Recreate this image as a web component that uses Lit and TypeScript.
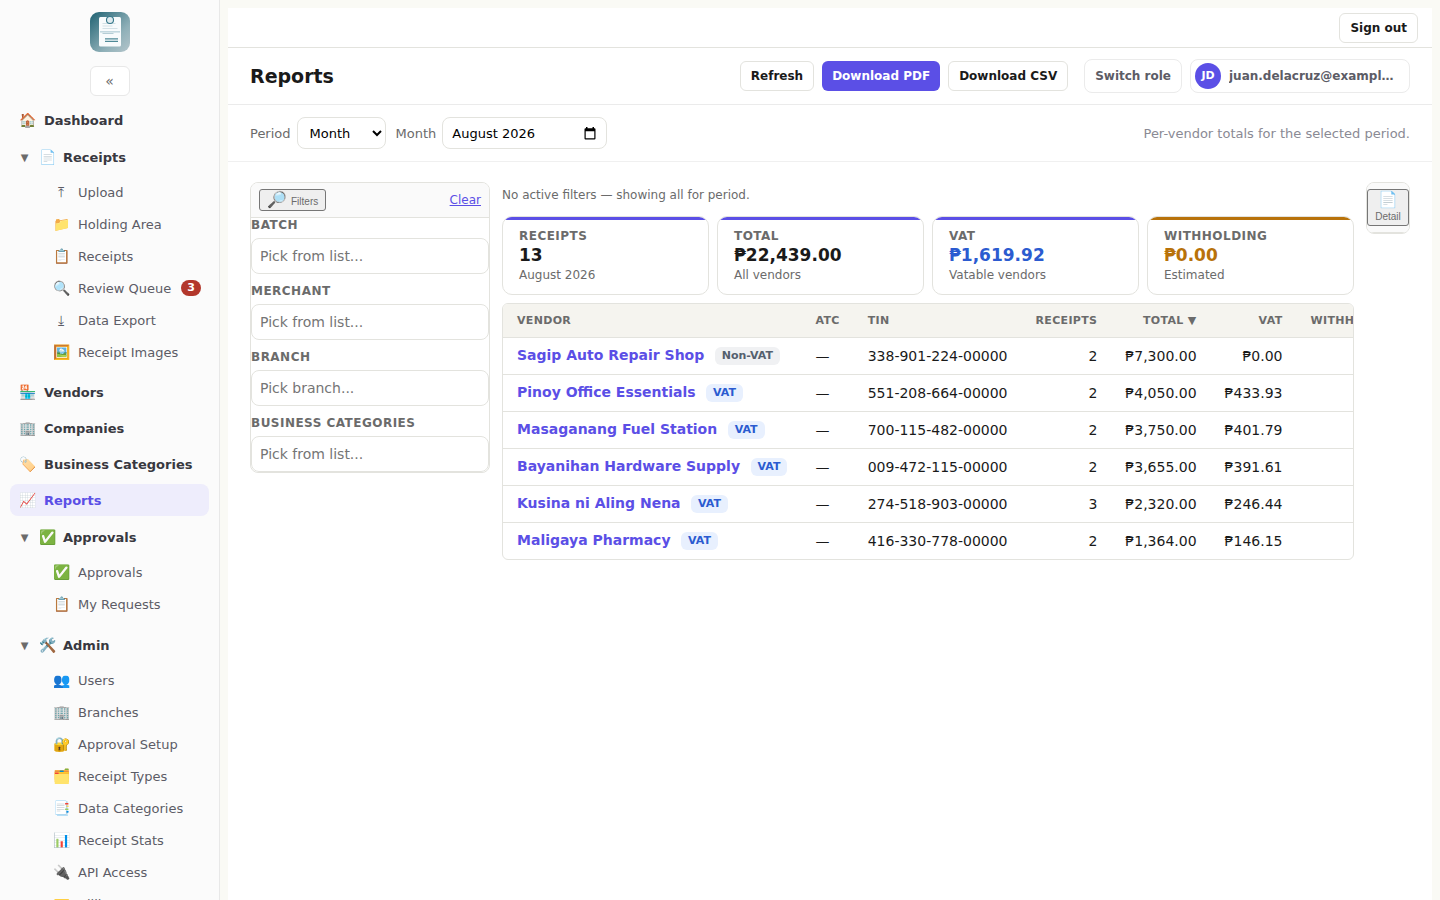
import { LitElement, html, css, nothing } from "lit";
import { customElement, property, state } from "lit/decorators.js";
import { classMap } from "lit/directives/class-map.js";

interface NavItem {
  icon: string;
  label: string;
  badge?: number;
  active?: boolean;
  children?: NavItem[];
}

const NAV: NavItem[] = [
  { icon: "🏠", label: "Dashboard" },
  {
    icon: "📄",
    label: "Receipts",
    children: [
      { icon: "⤒", label: "Upload" },
      { icon: "📁", label: "Holding Area" },
      { icon: "📋", label: "Receipts" },
      { icon: "🔍", label: "Review Queue", badge: 3 },
      { icon: "⤓", label: "Data Export" },
      { icon: "🖼️", label: "Receipt Images" },
    ],
  },
  { icon: "🏪", label: "Vendors" },
  { icon: "🏢", label: "Companies" },
  { icon: "🏷️", label: "Business Categories" },
  { icon: "📈", label: "Reports", active: true },
  {
    icon: "✅",
    label: "Approvals",
    children: [
      { icon: "✅", label: "Approvals" },
      { icon: "📋", label: "My Requests" },
    ],
  },
  {
    icon: "🛠️",
    label: "Admin",
    children: [
      { icon: "👥", label: "Users" },
      { icon: "🏢", label: "Branches" },
      { icon: "🔐", label: "Approval Setup" },
      { icon: "🗂️", label: "Receipt Types" },
      { icon: "📑", label: "Data Categories" },
      { icon: "📊", label: "Receipt Stats" },
      { icon: "🔌", label: "API Access" },
      { icon: "💳", label: "Billing" },
    ],
  },
];

@customElement("side-nav")
class SideNav extends LitElement {
  static styles = css`
    :host {
      display: flex;
      flex-direction: column;
      box-sizing: border-box;
      height: 100%;
      overflow: hidden;
      padding: 12px 10px 0;
      background: #fbfbfb;
      border-right: 1px solid #e8e8e8;
      font-size: 13px;
      line-height: 16px;
    }
    .brand {
      display: flex;
      flex-direction: column;
      align-items: center;
      gap: 14px;
      margin-bottom: 8px;
    }
    .logo {
      display: block;
      width: 40px;
      height: 40px;
    }
    .collapse {
      box-sizing: border-box;
      width: 40px;
      height: 30px;
      padding: 0;
      border: 1px solid #e8e8e8;
      border-radius: 6px;
      background: #fff;
      color: #6b6b6b;
      font: 14px "DejaVu Sans", sans-serif;
    }
    .nav {
      display: flex;
      flex-direction: column;
      gap: 4px;
    }
    .link,
    .head {
      display: flex;
      align-items: center;
      gap: 9px;
      box-sizing: border-box;
      width: 100%;
      min-height: 32px;
      padding: 2px 9px 0;
      border: 0;
      border-radius: 8px;
      background: none;
      color: #38383f;
      font: inherit;
      font-weight: 700;
      text-align: left;
      text-decoration: none;
      white-space: nowrap;
    }
    .head {
      gap: 8px;
      min-height: 34px;
      padding: 2px 10px 0;
    }
    .link.active {
      background: #eeedfc;
      color: #5b4fe6;
    }
    .icon {
      display: flex;
      justify-content: center;
      flex: none;
      width: 16px;
      padding-bottom: 2px;
      font-size: 14px;
    }
    .caret {
      width: 9px;
      padding-right: 2px;
      color: #6b6b6b;
      font-size: 10px;
      font-weight: 400;
      text-align: center;
    }
    .group {
      display: flex;
      flex-direction: column;
      gap: 2px;
      padding-bottom: 4px;
    }
    .children {
      padding-left: 34px;
    }
    .children .link {
      padding-right: 8px;
      color: #5c5c66;
      font-weight: 400;
    }
    .badge {
      padding: 0 6px;
      margin: 0 0 2px 1px;
      border-radius: 8px;
      background: #b3372b;
      color: #fff;
      font-size: 11px;
      font-weight: 700;
    }
  `;

  private renderLink(item: NavItem) {
    return html`<a class=${classMap({ link: true, active: !!item.active })} href="#">
      <span class="icon">${item.icon}</span>
      <span>${item.label}</span>
      ${item.badge ? html`<span class="badge">${item.badge}</span>` : nothing}
    </a>`;
  }

  private renderGroup(item: NavItem) {
    return html`<div class="group">
      <button class="head" aria-expanded="true">
        <span class="caret">▼</span>
        <span class="icon">${item.icon}</span>
        <span>${item.label}</span>
      </button>
      <div class="children">${item.children!.map((c) => this.renderLink(c))}</div>
    </div>`;
  }

  render() {
    return html`
      <div class="brand">
        <svg class="logo" viewBox="0 0 40 40" aria-hidden="true">
          <defs>
            <linearGradient id="g" x1="0" y1="0" x2="1" y2="1">
              <stop offset="0" stop-color="#1f6272" />
              <stop offset="0.65" stop-color="#8fb0b8" />
              <stop offset="1" stop-color="#b4c5cb" />
            </linearGradient>
          </defs>
          <rect width="40" height="40" rx="9" fill="url(#g)" />
          <rect x="9" y="5" width="22" height="29.500" rx="1.500" fill="#f8fbfc" />
          <path d="M12.500 11.500h13M12.500 14h10M12.500 16.500h15" stroke="#d3e1e6" stroke-width="1" />
          <path d="M10 19.800h20" stroke="#c3d8df" stroke-width="1.600" />
          <path d="M12.500 21.500h11" stroke="#b5cdd5" stroke-width="1" />
          <path d="M15 26.800h13M15 29.400h13" stroke="#4f8a97" stroke-width="1.300" />
          <circle cx="20" cy="8" r="3.500" fill="#dfeaee" stroke="#34778a" stroke-width="1.100" />
        </svg>
        <button class="collapse" aria-label="Collapse menu">«</button>
      </div>
      <nav class="nav">
        ${NAV.map((i) => (i.children ? this.renderGroup(i) : this.renderLink(i)))}
      </nav>
    `;
  }
}

interface VendorRow {
  name: string;
  vat: boolean;
  tin: string;
  receipts: number;
  total: string;
  tax: string;
}

const ROWS: VendorRow[] = [
  { name: "Sagip Auto Repair Shop", vat: false, tin: "338-901-224-00000", receipts: 2, total: "₱7,300.00", tax: "₱0.00" },
  { name: "Pinoy Office Essentials", vat: true, tin: "551-208-664-00000", receipts: 2, total: "₱4,050.00", tax: "₱433.93" },
  { name: "Masaganang Fuel Station", vat: true, tin: "700-115-482-00000", receipts: 2, total: "₱3,750.00", tax: "₱401.79" },
  { name: "Bayanihan Hardware Supply", vat: true, tin: "009-472-115-00000", receipts: 2, total: "₱3,655.00", tax: "₱391.61" },
  { name: "Kusina ni Aling Nena", vat: true, tin: "274-518-903-00000", receipts: 3, total: "₱2,320.00", tax: "₱246.44" },
  { name: "Maligaya Pharmacy", vat: true, tin: "416-330-778-00000", receipts: 2, total: "₱1,364.00", tax: "₱146.15" },
];

@customElement("vendor-table")
class VendorTable extends LitElement {
  @property({ attribute: false }) rows: VendorRow[] = [];

  static styles = css`
    :host {
      display: block;
      overflow: hidden;
      border: 1px solid #e3e3de;
      border-radius: 6px;
      background: #fff;
    }
    .table {
      min-width: 100%;
      border-collapse: separate;
      border-spacing: 0;
      font-size: 14px;
      line-height: 16px;
      white-space: nowrap;
    }
    .th,
    .td {
      padding: 9px 14px;
      text-align: left;
    }
    .th {
      padding-bottom: 8px;
      background: #f5f4ef;
      border-bottom: 1px solid #e3e3de;
      color: #6b6b6b;
      font-size: 11px;
      font-weight: 700;
      letter-spacing: 0.03em;
      text-transform: uppercase;
    }
    .td {
      border-bottom: 1px solid #e3e3de;
      color: #1a1a1a;
    }
    .row:last-child .td {
      border-bottom: 0;
    }
    .num {
      text-align: right;
    }
    .vendor {
      margin-right: 6px;
      color: #5b4fe6;
      font-weight: 700;
      text-decoration: none;
    }
    .tag {
      display: inline-block;
      padding: 1px 7px;
      border-radius: 6px;
      background: #f0f1f3;
      color: #55606e;
      font-size: 11px;
      font-weight: 700;
      vertical-align: top;
    }
    .tag.vat {
      background: #e8f0fe;
      color: #2b5bd0;
    }
  `;

  render() {
    return html`<table class="table">
      <thead>
        <tr>
          <th class="th" scope="col">Vendor</th>
          <th class="th" scope="col">ATC</th>
          <th class="th" scope="col">TIN</th>
          <th class="th num" scope="col">Receipts</th>
          <th class="th num" scope="col" aria-sort="descending">Total ▼</th>
          <th class="th num" scope="col">VAT</th>
          <th class="th num" scope="col">Withholding</th>
        </tr>
      </thead>
      <tbody>
        ${this.rows.map(
          (r) => html`<tr class="row">
            <td class="td">
              <a class="vendor" href="#">${r.name}</a>
              <span class=${classMap({ tag: true, vat: r.vat })}>${r.vat ? "VAT" : "Non-VAT"}</span>
            </td>
            <td class="td">—</td>
            <td class="td">${r.tin}</td>
            <td class="td num">${r.receipts}</td>
            <td class="td num">${r.total}</td>
            <td class="td num">${r.tax}</td>
            <td class="td num">₱0.00</td>
          </tr>`
        )}
      </tbody>
    </table>`;
  }
}

const FILTERS = [
  { id: "batch", label: "Batch", hint: "Pick from list..." },
  { id: "merchant", label: "Merchant", hint: "Pick from list..." },
  { id: "branch", label: "Branch", hint: "Pick branch..." },
  { id: "category", label: "Business categories", hint: "Pick from list..." },
];

const STATS = [
  { label: "Receipts", value: "13", note: "August 2026", tone: "" },
  { label: "Total", value: "₱22,439.00", note: "All vendors", tone: "" },
  { label: "VAT", value: "₱1,619.92", note: "Vatable vendors", tone: "blue" },
  { label: "Withholding", value: "₱0.00", note: "Estimated", tone: "amber" },
];

@customElement("app-root")
class AppRoot extends LitElement {
  @state() private month = "August 2026";

  static styles = css`
    :host {
      display: grid;
      grid-template-columns: 220px minmax(0, 1fr);
      height: 100vh;
      overflow: hidden;
      background: #fafaf5;
      color: #1a1a1a;
      font-family: "DejaVu Sans", sans-serif;
      font-size: 14px;
    }
    .main {
      display: flex;
      flex-direction: column;
      box-sizing: border-box;
      min-width: 0;
      margin: 8px 8px 0;
      background: #fff;
    }
    .topbar {
      display: flex;
      align-items: center;
      justify-content: flex-end;
      padding: 5px 14px 4px;
      border-bottom: 1px solid #e3e3de;
    }
    .header,
    .period {
      display: flex;
      align-items: center;
      min-height: 32px;
      padding: 12px 22px;
      border-bottom: 1px solid #ebebeb;
    }
    .header {
      gap: 8px;
      padding: 10px 22px;
      min-height: 36px;
    }
    .title {
      margin: 0 auto 0 0;
      font-size: 19px;
      line-height: 24px;
      font-weight: 700;
    }
    .btn {
      box-sizing: border-box;
      height: 30px;
      padding: 0 10px;
      border: 1px solid #e3e3de;
      border-radius: 6px;
      background: #fff;
      color: #1a1a1a;
      font: 700 12px "DejaVu Sans", sans-serif;
      white-space: nowrap;
    }
    .btn.primary {
      border: 0;
      background: #5b4fe6;
      color: #fff;
    }
    .account {
      display: flex;
      gap: 8px;
      margin-left: 8px;
    }
    .btn.soft {
      display: flex;
      align-items: center;
      gap: 8px;
      height: 34px;
      border-color: #ebebeb;
      border-radius: 8px;
      color: #5c5c66;
    }
    .btn.user {
      width: 220px;
      padding: 0 14px 0 4px;
    }
    .avatar {
      flex: none;
      width: 26px;
      border-radius: 50%;
      background: #5b4fe6;
      color: #fff;
      font-size: 11px;
      line-height: 26px;
      text-align: center;
    }
    .email {
      overflow: hidden;
      text-overflow: ellipsis;
    }
    .period {
      gap: 6px;
      color: #6b6b6b;
      font-size: 13px;
      border-color: #f0f0f0;
    }
    .control {
      box-sizing: border-box;
      height: 32px;
      border: 1px solid #e3e3de;
      border-radius: 8px;
      background: #fff;
      color: #000;
      font: 13px "DejaVu Sans", sans-serif;
    }
    .select {
      width: 89px;
      padding: 0 0 0 8px;
      margin-right: 4px;
    }
    .month {
      display: flex;
      align-items: center;
      width: 165px;
      padding: 0 10px 0 9px;
    }
    .month-input {
      flex: 1;
      min-width: 0;
      padding: 0;
      border: 0;
      background: none;
      color: inherit;
      font: inherit;
    }
    .picker {
      display: flex;
      padding: 0;
      border: 0;
      background: none;
      color: inherit;
    }
    .picker-icon {
      display: block;
      width: 12px;
      height: 13px;
    }
    .hint {
      margin-left: auto;
      color: #8a8a94;
    }
    .content {
      display: grid;
      grid-template-columns: 240px minmax(0, 1fr) 44px;
      align-items: start;
      gap: 12px;
      padding: 20px 22px;
    }
    .panel {
      overflow: hidden;
      border: 1px solid #e3e3de;
      border-radius: 8px;
      background: #fff;
    }
    .panel-head {
      display: flex;
      align-items: center;
      justify-content: space-between;
      padding: 6px 8px;
      border-bottom: 1px solid #e3e3de;
      background: #fafafa;
    }
    .detail-head {
      padding: 6px 0;
    }
    .toggle {
      display: flex;
      align-items: center;
      gap: 4px;
      padding: 0 7px;
      border: 1px solid #767676;
      border-radius: 3px;
      background: #efefef;
      color: #6b6b6b;
      font: 10px/13px "Liberation Sans", sans-serif;
    }
    .toggle-icon {
      font-size: 16px;
      line-height: 20px;
    }
    .toggle-text {
      padding-top: 2px;
    }
    .toggle.stacked {
      flex-direction: column;
      gap: 0;
      width: 100%;
      padding: 0 0 2px;
    }
    .stacked .toggle-text {
      padding-top: 0;
    }
    .clear {
      color: #5b4fe6;
      font-size: 12px;
    }
    .fields {
      display: flex;
      flex-direction: column;
      gap: 10px;
    }
    .field {
      display: flex;
      flex-direction: column;
      gap: 6px;
    }
    .label {
      color: #6b6b6b;
      font-size: 12px;
      line-height: 14px;
      font-weight: 700;
      letter-spacing: 0.04em;
      text-transform: uppercase;
    }
    .input {
      width: 100%;
      height: 36px;
      padding: 0 8px;
      font-size: 14px;
    }
    .input::placeholder {
      color: #757575;
    }
    .report {
      display: flex;
      flex-direction: column;
      gap: 8px;
    }
    .status {
      margin: 0;
      padding: 6px 0;
      color: #6b6b6b;
      font-size: 12px;
      line-height: 14px;
    }
    .stats {
      display: grid;
      grid-template-columns: repeat(4, minmax(0, 1fr));
      gap: 8px;
    }
    .stat {
      overflow: hidden;
      border: 1px solid #e3e3de;
      border-radius: 10px;
      background: #fff;
    }
    .stat::before {
      display: block;
      height: 3px;
      background: #5b4fe6;
      content: "";
    }
    .stat.amber::before {
      background: #b8720a;
    }
    .stat-body {
      padding: 9px 16px 11px;
      color: #6b6b6b;
      font-size: 12px;
      line-height: 16px;
    }
    .stat-value {
      color: #1a1a1a;
      font-size: 17px;
      line-height: 24px;
      font-weight: 700;
    }
    .blue .stat-value {
      color: #2b5bd0;
    }
    .amber .stat-value {
      color: #b8720a;
    }
  `;

  render() {
    return html`
      <side-nav></side-nav>
      <main class="main">
        <div class="topbar"><button class="btn">Sign out</button></div>
        <header class="header">
          <h1 class="title">Reports</h1>
          <button class="btn">Refresh</button>
          <button class="btn primary">Download PDF</button>
          <button class="btn">Download CSV</button>
          <div class="account">
            <button class="btn soft">Switch role</button>
            <button class="btn soft user">
              <span class="avatar">JD</span>
              <span class="email">juan.delacruz@example.com</span>
            </button>
          </div>
        </header>
        <div class="period">
          <label for="period">Period</label>
          <select class="control select" id="period">
            <option>Month</option>
          </select>
          <label for="month">Month</label>
          <div class="control month">
            <input class="month-input" id="month" type="text" .value=${this.month} />
            <button class="picker" aria-label="Choose month">
              <svg class="picker-icon" viewBox="0 0 12 13" aria-hidden="true">
                <path d="M2 0h1.500v1.300h5V0H10v1.300h.6c.5 0 .9.4.9.9v9.400c0 .5-.4.9-.9.9H1.400c-.5 0-.9-.4-.9-.9V2.200c0-.5.4-.9.9-.9H2zM1.700 4.300v7h8.600v-7z" fill="currentColor" fill-rule="evenodd" />
              </svg>
            </button>
          </div>
          <span class="hint">Per-vendor totals for the selected period.</span>
        </div>
        <div class="content">
          <aside class="panel">
            <div class="panel-head">
              <button class="toggle">
                <span class="toggle-icon">🔎</span>
                <span class="toggle-text">Filters</span>
              </button>
              <a class="clear" href="#">Clear</a>
            </div>
            <div class="fields">
              ${FILTERS.map(
                (f) => html`<div class="field">
                  <label class="label" for=${f.id}>${f.label}</label>
                  <input class="control input" id=${f.id} type="text" placeholder=${f.hint} />
                </div>`
              )}
            </div>
          </aside>
          <section class="report">
            <p class="status">No active filters — showing all for period.</p>
            <div class="stats">
              ${STATS.map(
                (s) => html`<div class="stat ${s.tone}">
                  <div class="stat-body">
                    <div class="label">${s.label}</div>
                    <div class="stat-value">${s.value}</div>
                    <div>${s.note}</div>
                  </div>
                </div>`
              )}
            </div>
            <vendor-table .rows=${ROWS}></vendor-table>
          </section>
          <aside class="panel">
            <div class="panel-head detail-head">
              <button class="toggle stacked">
                <span class="toggle-icon">📄</span>
                <span class="toggle-text">Detail</span>
              </button>
            </div>
          </aside>
        </div>
      </main>
    `;
  }
}
